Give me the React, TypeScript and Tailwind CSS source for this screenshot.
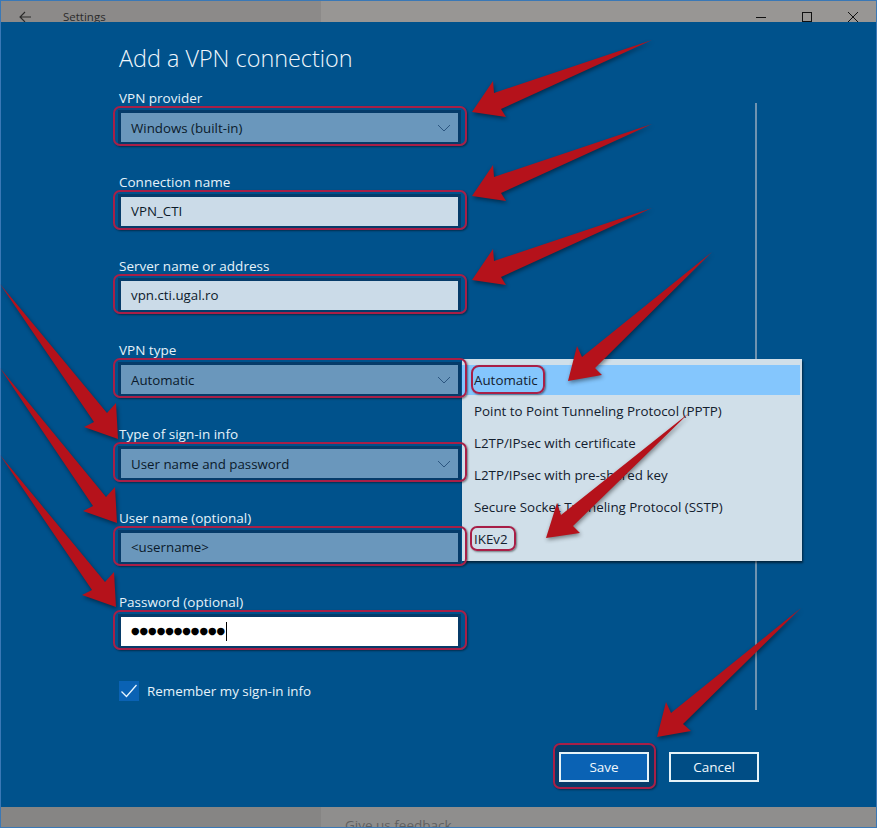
import React from "react";

const font = "font-['Open_Sans','Noto_Sans',sans-serif]";

function Chevron() {
  return (
    <svg width="14" height="8" viewBox="0 0 14 8" fill="none" stroke="#2c5680" strokeWidth="1">
      <path d="M1 1 L7 7 L13 1" />
    </svg>
  );
}

function Ring({ className }: { className: string }) {
  return (
    <span
      className={
        "pointer-events-none absolute z-10 border-[2.5px] border-[#a81f47] shadow-[1px_1px_2px_rgba(0,0,0,0.45)] " +
        className
      }
    />
  );
}

function Field({
  label,
  value,
  kind,
}: {
  label: string;
  value?: string;
  kind: "select" | "input" | "disabled" | "password";
}) {
  const bg =
    kind === "input"
      ? "bg-[#cbdbe8]"
      : kind === "password"
        ? "bg-white"
        : "bg-[#6a97bc]";
  return (
    <div className="flex flex-col gap-[3px]">
      <div className="h-[20px] pl-[1px] text-[13.5px] leading-[22px] text-[#e6f2fa]">{label}</div>
      <div className="relative h-[35px] w-[343px] border-[3px] border-[#063b69]">
        <Ring className="-left-[8px] -right-[9px] -top-[7px] -bottom-[4px] rounded-[7px]" />
        <div className={"flex h-full items-center justify-between pl-[10px] pr-[7px] text-[13.3px] text-[#0b1a2b] " + bg}>
          {kind === "password" ? (
            <span className="flex h-[22px] items-center font-['DejaVu_Sans',sans-serif] text-[9.8px] text-black">
              ●●●●●●●●●●●
              <span className="ml-[1px] inline-block h-[19px] w-[1px] bg-black" />
            </span>
          ) : (
            <span className={kind === "select" ? "pt-[3px]" : "pt-[1px]"}>{value}</span>
          )}
          {kind === "select" && <Chevron />}
        </div>
      </div>
    </div>
  );
}

const arrows = [
  "652,40 494,93 493,81 472,112 506,117 501,109",
  "652,124 494,177 493,165 472,196 506,201 501,193",
  "652,208 494,261 493,249 472,280 506,285 501,277",
  "712,252 582,357 577,346 568,381 602,375 595,368",
  "689,413 561,515 557,503 546,538 580,533 573,526",
  "801,608 671,713 666,702 657,737 691,731 683,724",
  "0,284 94,422 84,427 118,439 116,403 107,413",
  "0,368 93,506 83,511 117,523 115,487 106,497",
  "0,455 92,590 82,595 116,607 114,572 105,582",
];

const options = [
  "Automatic",
  "Point to Point Tunneling Protocol (PPTP)",
  "L2TP/IPsec with certificate",
  "L2TP/IPsec with pre-shared key",
  "Secure Socket Tunneling Protocol (SSTP)",
  "IKEv2",
];

export default function App() {
  return (
    <div className={"relative h-[828px] w-[877px] overflow-hidden " + font}>
      <div className="flex h-full w-full flex-col border border-[#3a78b6] bg-[#00528c]">
        {/* title bar */}
        <div className="flex h-[21px] shrink-0 overflow-hidden bg-[#989694] text-[#222]">
          <div className="flex w-[320px] items-start bg-[#8c8a89]">
            <svg className="ml-[18px] mt-[10px]" width="12" height="12" viewBox="0 0 12 12" fill="none" stroke="#2a2a2a" strokeWidth="1.1">
              <path d="M12 6 H1 M6 1 L1 6 L6 11" />
            </svg>
            <span className="ml-[32px] mt-[7px] text-[11.5px] leading-[18px] text-[#2b2b2b]">Settings</span>
          </div>
          <div className="flex flex-1 items-start justify-end pr-[18px]">
            <svg className="mt-[16px]" width="10" height="1" viewBox="0 0 10 1">
              <rect width="10" height="1" fill="#111" />
            </svg>
            <svg className="ml-[36px] mt-[11px]" width="10" height="10" viewBox="0 0 10 10" fill="none" stroke="#111">
              <rect x="0.5" y="0.5" width="9" height="9" />
            </svg>
            <svg className="ml-[36px] mt-[11px]" width="10" height="10" viewBox="0 0 10 10" fill="none" stroke="#111">
              <path d="M0 0 L10 10 M10 0 L0 10" />
            </svg>
          </div>
        </div>

        {/* body */}
        <div className="relative flex-1">
          <div className="flex pl-[117px]">
            <div className="flex w-[343px] flex-col">
              <h1 className="mt-[20px] pl-[1px] text-[23.4px] font-light leading-[32px] text-[#f0f7fc]">
                Add a VPN connection
              </h1>
              <div className="mt-[13px] flex flex-col gap-[26px]">
                <Field label="VPN provider" value="Windows (built-in)" kind="select" />
                <Field label="Connection name" value="VPN_CTI" kind="input" />
                <Field label="Server name or address" value="vpn.cti.ugal.ro" kind="input" />
                <Field label="VPN type" value="Automatic" kind="select" />
                <Field label="Type of sign-in info" value="User name and password" kind="select" />
                <Field label="User name (optional)" value="<username>" kind="disabled" />
                <Field label="Password (optional)" kind="password" />
              </div>
              <div className="ml-[1px] mt-[32px] flex items-center gap-[8px] text-[13.4px] text-[#e6f2fa]">
                <span className="flex h-[20px] w-[20px] items-center justify-center bg-[#0a62b4]">
                  <svg width="20" height="20" viewBox="0 0 20 20" fill="none" stroke="#e8f6ff" strokeWidth="1.3">
                    <path d="M2.5 10.5 L7.5 15.5 L17.5 4" />
                  </svg>
                </span>
                Remember my sign-in info
              </div>
            </div>
            <div className="ml-[294px] mt-[81px] h-[607px] w-[2px] bg-[#6f93b0]" />
          </div>

          <div className="mt-[42px] flex justify-end gap-[20px] pr-[117px] text-[13.5px] text-[#f2f8fc]">
            <div className="relative">
              <span className="absolute -left-[6px] -right-[7px] -top-[9px] -bottom-[7px] rounded-[7px] bg-[#063b69]" />
              <Ring className="-left-[6px] -right-[7px] -top-[9px] -bottom-[7px] rounded-[7px]" />
              <button className="relative flex h-[30px] w-[90px] items-center justify-center border-2 border-[#e6f3f8] bg-[#0a62b4]">
                Save
              </button>
            </div>
            <button className="flex h-[30px] w-[90px] items-center justify-center border-2 border-[#e6f3f8] bg-[#004d85]">
              Cancel
            </button>
          </div>

          {/* dropdown */}
          <div className="absolute left-[461px] top-[337px] h-[202px] w-[340px] bg-[#d0dfe9] pt-[6px] text-[13.35px] text-[#13202e] shadow-[1px_2px_2px_rgba(0,0,0,0.55)]">
            {options.map((o, i) => (
              <div
                key={o}
                className={
                  i === 0
                    ? "mr-[2px] flex h-[30px] items-center bg-[#84c6fd] pl-[12px]"
                    : "flex h-[32px] items-center pl-[12px]"
                }
              >
                <span className="relative">
                  {i === 0 && (
                    <Ring className="-left-[3px] -right-[7px] -top-[5px] -bottom-[4px] rounded-[8px]" />
                  )}
                  {i === 5 && (
                    <Ring className="-left-[4px] -right-[8px] -top-[3px] -bottom-[2px] rounded-[7px]" />
                  )}
                  {o}
                </span>
              </div>
            ))}
          </div>
        </div>

        {/* bottom bar */}
        <div className="flex h-[20px] shrink-0 overflow-hidden bg-[#8f8e8d]">
          <div className="w-[320px] bg-[#868584]" />
          <span className="ml-[24px] mt-[8px] text-[13.5px] leading-[20px] text-[#5f5f5f]">Give us feedback</span>
        </div>
      </div>

      {/* annotation arrows */}
      <svg
        className="pointer-events-none absolute left-0 top-0 z-20 drop-shadow-[1px_2px_2px_rgba(0,0,0,0.45)]"
        width="877"
        height="828"
        viewBox="0 0 877 828"
      >
        {arrows.map((p) => (
          <polygon key={p} points={p} fill="#b5121b" />
        ))}
      </svg>
    </div>
  );
}
